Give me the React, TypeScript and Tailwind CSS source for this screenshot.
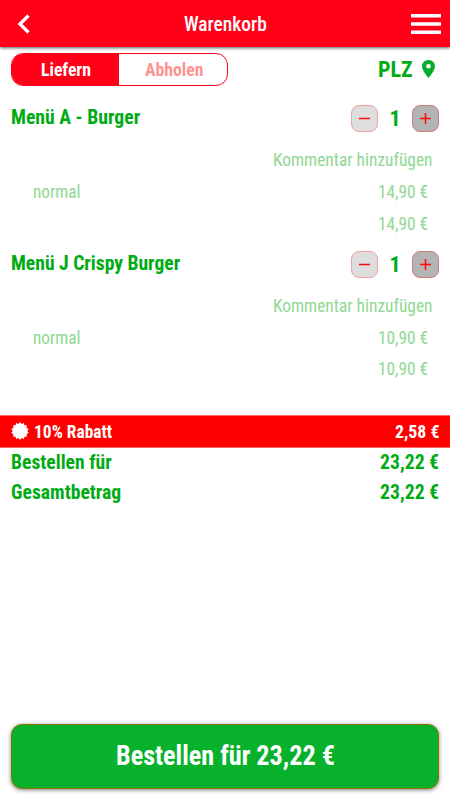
import React, { useLayoutEffect, useRef, useState } from 'react';

/** Condensed label that is fitted to the given width. */
function Label({ children, width, className = '' }: { children: string; width: number; className?: string }) {
  const ref = useRef<HTMLSpanElement>(null);
  const [scale, setScale] = useState(1);
  useLayoutEffect(() => {
    if (ref.current) setScale(width / ref.current.offsetWidth);
  }, [width]);
  return (
    <span className={`block shrink-0 whitespace-nowrap ${className}`} style={{ width }}>
      <span ref={ref} className="inline-block origin-left" style={{ transform: `scaleX(${scale})` }}>
        {children}
      </span>
    </span>
  );
}

function Stepper() {
  return (
    <div className="flex items-center">
      <button className="flex h-[27px] w-[27px] items-center justify-center rounded-[8px] border border-[#f2a0a0] bg-[#dedede]">
        <svg width="13" height="13" viewBox="0 0 13 13" stroke="#ff0a0a" strokeWidth="1.5">
          <path d="M1 6.5h11" />
        </svg>
      </button>
      <Label width={11} className="ml-[11.5px] text-[22px] leading-[27px] font-bold">1</Label>
      <button className="ml-[11.5px] flex h-[27px] w-[27px] items-center justify-center rounded-[8px] border border-[#d87878] bg-[#b4b4b4]">
        <svg width="13" height="13" viewBox="0 0 13 13" stroke="#ff0a0a" strokeWidth="1.5">
          <path d="M1 6.5h11M6.5 1v11" />
        </svg>
      </button>
    </div>
  );
}

function Item({ name, width, price }: { name: string; width: number; price: string }) {
  return (
    <section className="h-[145.5px] text-[18px] text-[#90d893]">
      <div className="flex h-[27px] items-center justify-between pr-[11px] pl-[10.5px] text-[#00ab14]">
        <Label width={width} className="-mt-[2px] text-[20px] leading-[27px] font-bold">{name}</Label>
        <Stepper />
      </div>
      <div className="mt-[11.6px] flex h-8 items-center justify-end pr-[17.5px]">
        <Label width={159.5}>Kommentar hinzufügen</Label>
      </div>
      <div className="mt-[0.4px] flex h-8 items-center justify-between pr-[22px] pl-[32.5px]">
        <Label width={48}>normal</Label>
        <Label width={50}>{price}</Label>
      </div>
      <div className="-mt-[0.5px] flex h-8 items-center justify-end pr-[22px]">
        <Label width={50}>{price}</Label>
      </div>
    </section>
  );
}

function Total({ name, width }: { name: string; width: number }) {
  return (
    <div className="flex h-[30px] items-center justify-between pr-[11px] pl-[10.5px] text-[20px] leading-[30px] font-bold text-[#00ab14]">
      <Label width={width}>{name}</Label>
      <Label width={59}>23,22 €</Label>
    </div>
  );
}

const sealPoints = Array.from({ length: 28 }, (_, i) => {
  const r = i % 2 === 0 ? 9 : 7.2;
  const a = (i * Math.PI) / 14;
  return `${9 + r * Math.sin(a)},${9 - r * Math.cos(a)}`;
}).join(' ');

export default function App() {
  return (
    <div className="flex h-[800px] w-[450px] flex-col overflow-hidden bg-white font-['Roboto_Condensed',Roboto,sans-serif] [font-stretch:75%]">
      <header className="flex h-[47px] shrink-0 items-center bg-[#ff0018] pr-[9px] pl-[17px] text-white shadow-[0_1px_3px_rgba(0,0,0,0.65)]">
        <svg width="13" height="20" viewBox="0 0 13 20" fill="none" stroke="white" strokeWidth="3.2">
          <path d="M11.5 1.5 3 10l8.5 8.5" />
        </svg>
        <Label width={82.5} className="ml-[153.5px] text-[20px] font-medium">Warenkorb</Label>
        <svg className="ml-auto" width="30" height="20" viewBox="0 0 30 20" fill="white">
          <path d="M0 0h30v3.5H0zM0 8.2h30v3.5H0zM0 16.4h30v3.5H0z" />
        </svg>
      </header>
      <div className="mt-[6px] flex h-[33px] shrink-0 items-center pr-[15px] pl-[11px]">
        <div className="flex h-[33px] w-[217px] overflow-hidden rounded-[12px] border border-[#ff0018] text-[18px] font-bold">
          <div className="flex w-[107px] items-center justify-center bg-[#ff0018] text-white">
            <Label width={50}>Liefern</Label>
          </div>
          <div className="flex flex-1 items-center pl-[25.5px] text-[#ff9292]">
            <Label width={58}>Abholen</Label>
          </div>
        </div>
        <Label width={35} className="ml-auto text-[22px] font-bold text-[#00ab14]">PLZ</Label>
        <svg className="ml-[9px] -mt-px" width="13" height="18" viewBox="5 2 14 20" preserveAspectRatio="none" fill="#07ad2c">
          <path d="M12 2C8.13 2 5 5.13 5 9c0 5.25 7 13 7 13s7-7.75 7-13c0-3.87-3.13-7-7-7zm0 9.5a2.5 2.5 0 1 1 0-5 2.5 2.5 0 0 1 0 5z" />
        </svg>
      </div>
      <main className="mt-[19px] h-[310px] shrink-0">
        <Item name="Menü A - Burger" width={129} price="14,90 €" />
        <Item name="Menü J Crispy Burger" width={169.5} price="10,90 €" />
      </main>
      <div className="flex h-[33px] shrink-0 items-center border-y border-[#ff6a6a] bg-[#ff0000] pr-[10.5px] pl-[11px] text-[18px] font-bold text-white">
        <svg className="-mt-px" width="18" height="18" viewBox="0 0 18 18" fill="white">
          <polygon points={sealPoints} />
        </svg>
        <Label width={78.5} className="ml-[4.5px]">10% Rabatt</Label>
        <Label width={44.5} className="ml-auto">2,58 €</Label>
      </div>
      <div className="-mt-px">
        <Total name="Bestellen für" width={101} />
        <Total name="Gesamtbetrag" width={110} />
      </div>
      <button className="mx-[11px] mt-auto mb-[11px] flex h-[65px] shrink-0 items-center justify-center rounded-[11px] border border-[#887600] bg-[#07b12c] text-[27px] font-bold text-white shadow-[0_1px_4px_rgba(0,0,0,0.5)]">
        <Label width={219}>Bestellen für 23,22 €</Label>
      </button>
    </div>
  );
}
